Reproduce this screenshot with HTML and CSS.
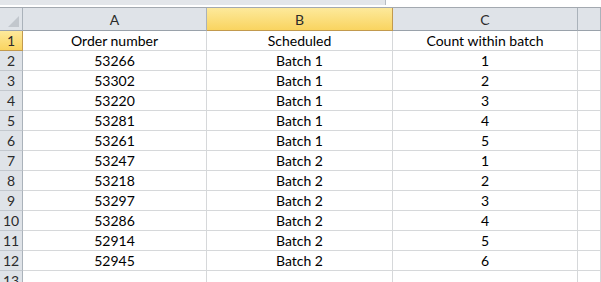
FILE: index.html
```html
<!DOCTYPE html>
<html lang="en">
<head>
  <meta charset="UTF-8">
  <title>Batch schedule</title>
  <link rel="stylesheet" href="styles.css">
</head>
<body>
  <div class="topbar">
    <div class="topbar-box"></div>
  </div>
  <table class="sheet">
    <colgroup>
      <col class="col-head">
      <col class="col-a">
      <col class="col-b">
      <col class="col-c">
      <col>
    </colgroup>
    <thead>
      <tr>
        <th class="corner"><span class="corner-mark"></span></th>
        <th class="colhead">A</th>
        <th class="colhead active">B</th>
        <th class="colhead">C</th>
        <th class="colhead"></th>
      </tr>
    </thead>
    <tbody>
      <tr><th class="rowhead active">1</th><td>Order number</td><td>Scheduled</td><td>Count within batch</td><td></td></tr>
      <tr><th class="rowhead">2</th><td>53266</td><td>Batch 1</td><td>1</td><td></td></tr>
      <tr><th class="rowhead">3</th><td>53302</td><td>Batch 1</td><td>2</td><td></td></tr>
      <tr><th class="rowhead">4</th><td>53220</td><td>Batch 1</td><td>3</td><td></td></tr>
      <tr><th class="rowhead">5</th><td>53281</td><td>Batch 1</td><td>4</td><td></td></tr>
      <tr><th class="rowhead">6</th><td>53261</td><td>Batch 1</td><td>5</td><td></td></tr>
      <tr><th class="rowhead">7</th><td>53247</td><td>Batch 2</td><td>1</td><td></td></tr>
      <tr><th class="rowhead">8</th><td>53218</td><td>Batch 2</td><td>2</td><td></td></tr>
      <tr><th class="rowhead">9</th><td>53297</td><td>Batch 2</td><td>3</td><td></td></tr>
      <tr><th class="rowhead">10</th><td>53286</td><td>Batch 2</td><td>4</td><td></td></tr>
      <tr><th class="rowhead">11</th><td>52914</td><td>Batch 2</td><td>5</td><td></td></tr>
      <tr><th class="rowhead">12</th><td>52945</td><td>Batch 2</td><td>6</td><td></td></tr>
      <tr><th class="rowhead">13</th><td></td><td></td><td></td><td></td></tr>
    </tbody>
  </table>
</body>
</html>
```

FILE: styles.css
```css
body {
  margin: 0;
  font-family: Lato, "Open Sans", sans-serif;
  font-size: 14px;
  color: #000;
  background: #fff;
  overflow: hidden;
}
.topbar {
  height: 5px;
  margin-bottom: 2px;
  display: flex;
}
.topbar-box {
  width: 386px;
  height: 5px;
  background: #e3e6ea;
  border-right: 1px solid #b6bcc3;
  box-sizing: border-box;
}
.sheet {
  border-collapse: separate;
  border-spacing: 0;
  table-layout: fixed;
  width: 100%;
  border-top: 1px solid #a3a9b0;
}
.col-head { width: 23px; }
.col-a { width: 184px; }
.col-b { width: 186px; }
.col-c { width: 185px; }
th, td {
  padding: 0;
  box-sizing: border-box;
  white-space: nowrap;
  overflow: hidden;
}
thead th {
  height: 23px;
  font-weight: normal;
  color: #2b2b2b;
  background: #dfe3e8;
  border-right: 1px solid #aab2ba;
  border-bottom: 1px solid #9aa2ab;
  text-align: center;
  vertical-align: middle;
}
thead th.active {
  background: linear-gradient(#fde99b, #f9d460);
  border-right-color: #c29a4e;
  border-bottom-color: #c29a4e;
}
.corner {
  position: relative;
}
.corner-mark {
  position: absolute;
  right: 3px;
  bottom: 3px;
  width: 0;
  height: 0;
  border-left: 11px solid transparent;
  border-bottom: 11px solid #c2c7cd;
}
tbody td, tbody th {
  height: 20px;
  border-right: 1px solid #d6d8da;
  border-bottom: 1px solid #d6d8da;
  text-align: center;
  vertical-align: middle;
  line-height: 19px;
}
tbody th.rowhead {
  font-weight: normal;
  color: #2b2b2b;
  background: #dfe3e8;
  border-right: 1px solid #aab2ba;
  border-bottom: 1px solid #c3c8ce;
}
tbody th.rowhead.active {
  background: linear-gradient(#fde99b, #f9d460);
  border-right-color: #c29a4e;
  border-bottom-color: #c29a4e;
}
```
